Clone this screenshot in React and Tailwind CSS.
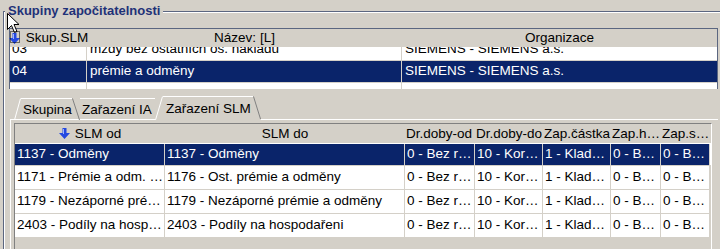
import React from "react";

const Arrow = () => (
  <svg width="11" height="11" viewBox="0 0 11 11" className="shrink-0">
    <path d="M3.5 0h4v5h3.5L5.5 11 0 5h3.5z" fill="#2448e0" />
    <path d="M4.5 1v5" stroke="#9fb4ff" strokeWidth="1" />
  </svg>
);

const topRows = [
  { a: "03", b: "mzdy bez ostatních os. nákladů", c: "SIEMENS - SIEMENS a.s." },
  { a: "04", b: "prémie a odměny", c: "SIEMENS - SIEMENS a.s.", sel: true },
  { a: "", b: "", c: "" },
];

const botCols = [150, 240, 70, 68, 68, 50, 49];
const botHead = ["SLM od", "SLM do", "Dr.doby-od", "Dr.doby-do", "Zap.částka", "Zap.h…", "Zap.s…"];
const botRows = [
  { sel: true, c: ["1137 - Odměny", "1137 - Odměny", "0 - Bez r…", "10 - Kor…", "1 - Klad…", "0 - B…", "0 - B…"] },
  { c: ["1171 - Prémie a odm. …", "1176 - Ost. prémie a odměny", "0 - Bez r…", "10 - Kor…", "1 - Klad…", "0 - B…", "0 - B…"] },
  { c: ["1179 - Nezáporné pré…", "1179 - Nezáporné prémie a odměny", "0 - Bez r…", "10 - Kor…", "1 - Klad…", "0 - B…", "0 - B…"] },
  { c: ["2403 - Podíly na hosp…", "2403 - Podíly na hospodařeni", "0 - Bez r…", "10 - Kor…", "1 - Klad…", "0 - B…", "0 - B…"] },
];

export default function App() {
  return (
    <div className="relative w-[720px] h-[249px] overflow-hidden bg-[#d4d0c8] text-[13.5px] text-black font-['Liberation_Sans',Arial,sans-serif]">
      <fieldset className="m-0 p-0 ml-[3px] w-[760px] min-w-0 border-0 border-t border-l border-[#5b6680] shadow-[inset_1px_1px_0_#ffffff]">
        <legend className="ml-[1px] pl-[3px] pr-[3px] bg-[#d4d0c8] text-[13px] font-bold leading-[22px] text-[#1f3278] whitespace-nowrap">
          Skupiny započitatelnosti
        </legend>

        {/* top grid */}
        <div className="mt-[6px] ml-[5px] w-[709px] h-[61px] border-t border-l border-r border-[#5b6680] bg-white flex flex-col">
          <div className="h-[18px] bg-[#d4d0c8] flex shrink-0 leading-[18px]">
            <div className="w-[77px] flex items-center justify-center gap-[6px]">
              <Arrow />
              <span>Skup.SLM</span>
            </div>
            <div className="w-[315px] flex items-center justify-center">Název: [L]</div>
            <div className="flex-1 flex items-center justify-center">Organizace</div>
          </div>
          <div className="flex-1 overflow-hidden">
            {topRows.map((r, i) => (
              <div
                key={i}
                className={`flex h-[22px] border-b border-[#d4d0c8] ${i === 0 ? "-mt-[8px]" : ""} ${
                  r.sel ? "bg-[#0a246a] text-white" : "bg-white"
                }`}
              >
                <div className="w-[77px] flex items-center pl-[2px] border-r border-[#d4d0c8] whitespace-nowrap overflow-hidden">{r.a}</div>
                <div className="w-[315px] flex items-center pl-[3px] border-r border-[#d4d0c8] whitespace-nowrap overflow-hidden">{r.b}</div>
                <div className="flex-1 flex items-center pl-[3px] whitespace-nowrap overflow-hidden">{r.c}</div>
              </div>
            ))}
          </div>
        </div>

        {/* tabs + panel */}
        <div className="ml-[6px] mt-[7px] w-[708px]">
          <div className="flex items-end h-[24px] -mb-px pl-[4px]">
            <svg width="7" height="22" viewBox="0 0 7 22" className="shrink-0">
              <path d="M0.5 22L6.5 0.5" stroke="#ffffff" strokeWidth="1" />
            </svg>
            <div className="w-[51px] h-[22px] border-t border-white flex items-center pl-[2px] leading-none whitespace-nowrap">Skupina</div>
            <svg width="8" height="22" viewBox="0 0 8 22" className="shrink-0">
              <path d="M0.5 0.5L7.5 22" stroke="#808080" strokeWidth="1" />
            </svg>
            <div className="w-[75px] h-[22px] border-t border-white flex items-center pl-[2px] leading-none whitespace-nowrap">Zařazení IA</div>
            <div className="relative z-10 flex h-[24px]">
              <svg width="8" height="24" viewBox="0 0 8 24" className="shrink-0">
                <path d="M0 24L7.5 0.5L8 0.5L8 24Z" fill="#d4d0c8" />
                <path d="M0.5 24L7.5 0.5" stroke="#ffffff" strokeWidth="1" />
              </svg>
              <div className="w-[90px] h-[24px] bg-[#d4d0c8] border-t border-white flex items-start pt-[5px] pl-[3px] leading-none whitespace-nowrap">
                Zařazení SLM
              </div>
              <svg width="8" height="24" viewBox="0 0 8 24" className="shrink-0">
                <path d="M0 0.5L0.5 0.5L8 24L0 24Z" fill="#d4d0c8" />
                <path d="M0.5 0.5L7.5 23" stroke="#808080" strokeWidth="1" />
              </svg>
            </div>
          </div>
          <div className="border-t border-l border-white pl-[3px] pt-[3px] h-[140px]">
            <div className="w-[698px] h-[130px] border-t border-l border-r border-[#808080] border-r-white bg-[#d4d0c8]">
              <div className="flex h-[19px] bg-[#d4d0c8] leading-[19px]">
                {botHead.map((h, i) => (
                  <div
                    key={i}
                    style={{ width: botCols[i] }}
                    className={`flex items-center whitespace-nowrap overflow-hidden ${
                      i < 2 ? "justify-center gap-[5px]" : "pl-[1px]"
                    }`}
                  >
                    {i === 0 && <Arrow />}
                    <span>{h}</span>
                  </div>
                ))}
              </div>
              {botRows.map((r, ri) => (
                <div
                  key={ri}
                  className={`flex ${ri === 0 ? "h-[23px] pt-[1px] bg-white" : "h-[24px]"} border-b border-[#d4d0c8]`}
                >
                  {r.c.map((c, ci) => (
                    <div
                      key={ci}
                      style={{ width: botCols[ci] }}
                      className={`h-full flex items-center pl-[2px] whitespace-nowrap overflow-hidden border-r border-[#d4d0c8] ${
                        r.sel ? "bg-[#0a246a] text-white" : "bg-white"
                      }`}
                    >
                      {c}
                    </div>
                  ))}
                </div>
              ))}
            </div>
          </div>
        </div>
      </fieldset>

      {/* mouse cursor overlay */}
      <svg className="absolute left-[7px] top-[13px]" width="16" height="32" viewBox="0 0 16 32">
        <path d="M0.5 0.5V16.5L4.5 12.5L7.5 19.5L10 18.5L7 11.5H12Z" fill="#ffffff" stroke="#000000" strokeWidth="1" />
        <rect x="3.5" y="18.5" width="9" height="11" fill="none" stroke="#000000" strokeWidth="1" strokeDasharray="1 1" />
      </svg>
    </div>
  );
}
